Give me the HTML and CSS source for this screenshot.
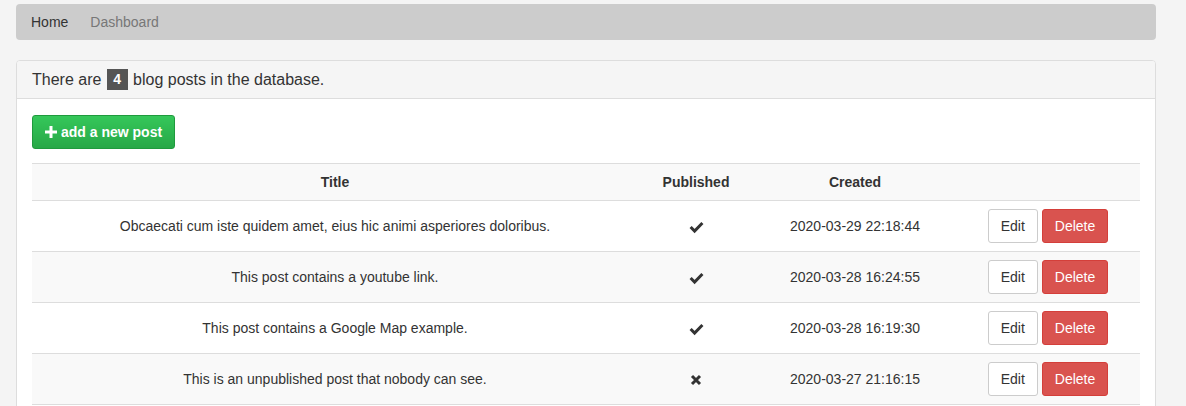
FILE: index.html
```html
<!DOCTYPE html>
<html>
<head>
<meta charset="utf-8">
<link rel="stylesheet" href="styles.css">
</head>
<body>
<div class="page">
  <nav class="topnav">
    <a class="nav-link active" href="#">Home</a>
    <a class="nav-link" href="#">Dashboard</a>
  </nav>

  <div class="panel">
    <div class="panel-heading">There are <span class="badge">4</span> blog posts in the database.</div>
    <div class="panel-body">
      <button class="btn btn-success"><svg class="plus" width="12" height="12" viewBox="0 0 12 12"><path d="M4.5 0h3v4.5H12v3H7.5V12h-3V7.5H0v-3h4.5z" fill="#fff"/></svg> add a new post</button>

      <table class="posts">
        <colgroup>
          <col class="c-title"><col class="c-pub"><col class="c-created"><col class="c-actions">
        </colgroup>
        <thead>
          <tr><th>Title</th><th>Published</th><th>Created</th><th></th></tr>
        </thead>
        <tbody>
          <tr>
            <td>Obcaecati cum iste quidem amet, eius hic animi asperiores doloribus.</td>
            <td><svg class="ico" width="15" height="14" viewBox="0 0 15 14"><path d="M1.6 7 L5.6 11 L13.4 3" fill="none" stroke="#333" stroke-width="3"/></svg></td>
            <td>2020-03-29 22:18:44</td>
            <td><button class="btn btn-default">Edit</button> <button class="btn btn-danger">Delete</button></td>
          </tr>
          <tr>
            <td>This post contains a youtube link.</td>
            <td><svg class="ico" width="15" height="14" viewBox="0 0 15 14"><path d="M1.6 7 L5.6 11 L13.4 3" fill="none" stroke="#333" stroke-width="3"/></svg></td>
            <td>2020-03-28 16:24:55</td>
            <td><button class="btn btn-default">Edit</button> <button class="btn btn-danger">Delete</button></td>
          </tr>
          <tr>
            <td>This post contains a Google Map example.</td>
            <td><svg class="ico" width="15" height="14" viewBox="0 0 15 14"><path d="M1.6 7 L5.6 11 L13.4 3" fill="none" stroke="#333" stroke-width="3"/></svg></td>
            <td>2020-03-28 16:19:30</td>
            <td><button class="btn btn-default">Edit</button> <button class="btn btn-danger">Delete</button></td>
          </tr>
          <tr>
            <td>This is an unpublished post that nobody can see.</td>
            <td><svg class="ico" width="14" height="14" viewBox="0 0 14 14"><path d="M3 3 L11 11 M11 3 L3 11" fill="none" stroke="#333" stroke-width="3"/></svg></td>
            <td>2020-03-27 21:16:15</td>
            <td><button class="btn btn-default">Edit</button> <button class="btn btn-danger">Delete</button></td>
          </tr>
        </tbody>
      </table>
    </div>
  </div>
</div>
</body>
</html>
```

FILE: styles.css
```css
* { box-sizing: border-box; }
html, body { margin: 0; padding: 0; }
body {
  background: #f4f4f4;
  font-family: "Liberation Sans", Arial, sans-serif;
  font-size: 14px;
  line-height: 20px;
  color: #333;
}
.page {
  margin: 4px 30px 0 16px;
}
.topnav {
  height: 36px;
  background: #cccccc;
  border-radius: 4px;
  display: flex;
  align-items: center;
  padding-left: 15px;
  gap: 22px;
}
.nav-link {
  color: #777;
  text-decoration: none;
  font-size: 14px;
}
.nav-link.active { color: #333; }

.panel {
  margin-top: 20px;
  background: #fff;
  border: 1px solid #ddd;
  border-radius: 4px;
}
.panel-heading {
  background: #f5f5f5;
  border-bottom: 1px solid #ddd;
  border-radius: 3px 3px 0 0;
  padding: 8px 15px;
  font-size: 16px;
  line-height: 21px;
  height: 38px;
  color: #333;
}
.badge {
  display: inline-block;
  background: #555;
  color: #fff;
  font-weight: bold;
  font-size: 14px;
  line-height: 21px;
  height: 21px;
  padding: 0 6.5px;
  vertical-align: top;
  margin: 0 1px;
}
.panel-body {
  padding: 16px 15px 15px;
}
.btn {
  display: inline-block;
  font-family: "Liberation Sans", Arial, sans-serif;
  font-size: 14px;
  line-height: 20px;
  padding: 6px 12px;
  border: 1px solid #ccc;
  border-radius: 3px;
  cursor: pointer;
  vertical-align: middle;
}
.btn-success {
  background: linear-gradient(#35c75a, #27a847);
  border-color: #1f9a3d;
  color: #fff;
  font-weight: bold;
  display: inline-flex;
  align-items: center;
  gap: 4px;
}
.plus { display: block; }
.btn-default {
  background: #fff;
  color: #333;
  border-color: #ccc;
}
.btn-danger {
  background: #d9534f;
  border-color: #d43f3a;
  color: #fff;
}
.posts {
  width: 100%;
  margin-top: 14px;
  border-collapse: collapse;
  table-layout: fixed;
}
.c-title { width: 606px; }
.c-pub { width: 116px; }
.c-created { width: 202px; }
.posts th {
  background: #f9f9f9;
  font-weight: bold;
  text-align: center;
  padding: 8px;
  border-top: 1px solid #ddd;
  border-bottom: 1px solid #ddd;
}
.posts td {
  text-align: center;
  padding: 8px;
  border-bottom: 1px solid #ddd;
  vertical-align: middle;
}
.posts tbody tr:nth-child(even) td { background: #f9f9f9; }
.ico { display: inline-block; vertical-align: middle; }
```
